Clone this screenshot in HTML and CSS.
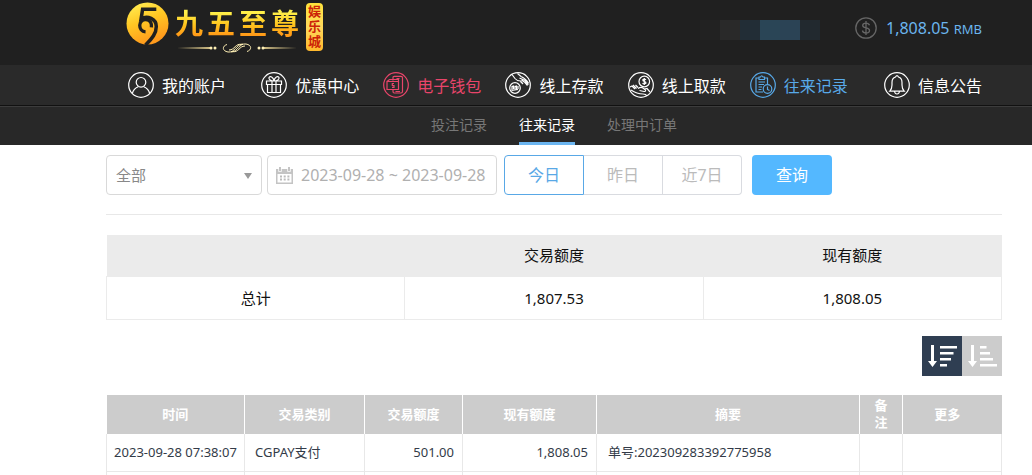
FILE: index.html
```html
<!DOCTYPE html>
<html lang="zh-CN">
<head>
<meta charset="utf-8">
<meta name="viewport" content="width=device-width, initial-scale=1">
<title>往来记录</title>
<link rel="stylesheet" href="styles.css">
</head>
<body>
<header class="site-header">
  <div class="topbar">
    <a class="logo" href="#">
      <svg class="logo-mark" viewBox="0 0 44 44" aria-hidden="true">
        <defs>
          <linearGradient id="gold" x1="0" y1="0" x2="0.4" y2="1">
            <stop offset="0" stop-color="#fff35a"/>
            <stop offset="0.5" stop-color="#ffc824"/>
            <stop offset="1" stop-color="#ff9a1c"/>
          </linearGradient>
        </defs>
        <circle cx="22" cy="22" r="21.500" fill="url(#gold)"/>
        <path d="M31 7.500H17L15.500 17C22 13.500 31 17 31 25C31 32 27 37 20 44" fill="none" stroke="#202020" stroke-width="3.600"/>
        <path d="M20 30.500C12 30 12 17.500 20.500 18C25 18.500 26.500 22 26 26" fill="none" stroke="#202020" stroke-width="3.400"/>
      </svg>
      <span class="logo-body">
        <span class="logo-name"><span>九</span><span>五</span><span>至</span><span>尊</span></span>
        <svg class="logo-rule" viewBox="0 0 124 12" aria-hidden="true">
          <path d="M2 6L36 5V7ZM122 6L88 5V7Z" fill="#d9c58a"/>
          <g fill="#fff0b5"><circle cx="36" cy="6" r="1.500"/><circle cx="40" cy="6" r="1.500"/><circle cx="84" cy="6" r="1.500"/><circle cx="88" cy="6" r="1.500"/></g>
          <path d="M52 2.500C47 4 47 9 53 10C60 11 61 2 68 2M57 9.500C64 11 64 4 70 4M72 9.500C77 8 77 3 71 2C64 1 63 10 56 10M67 2.500C60 1 60 8 54 8" fill="none" stroke="#fff0b5" stroke-width="1"/>
        </svg>
      </span>
      <span class="logo-tag">娱乐城</span>
    </a>
    <div class="user-mask" aria-hidden="true"><i class="tone-1"></i><i class="tone-2"></i><i class="tone-3"></i><i class="tone-4"></i><i class="tone-5"></i><i class="tone-6"></i></div>
    <div class="balance">
      <svg class="coin" viewBox="0 0 22 22" aria-hidden="true">
        <circle cx="11" cy="11" r="10.200"/>
        <path d="M14.500 8.300C14 6.800 12.700 6.200 11 6.200C9 6.200 7.700 7.100 7.700 8.500C7.700 12 14.500 9.900 14.500 13.400C14.500 15 13 15.900 11 15.900C9 15.900 7.700 15 7.400 13.500M11 4V18"/>
      </svg>
      <span class="amount">1,808.05 <small>RMB</small></span>
    </div>
  </div>
  <nav class="mainnav" aria-label="主导航">
    <a href="#">
      <svg viewBox="0 0 26 26" aria-hidden="true"><circle cx="13" cy="13" r="12.300"/><circle cx="13" cy="10.300" r="4.800"/><path d="M4.300 21.500C5.300 17.500 8 15.600 10.200 14.700M15.800 14.700C18 15.600 20.700 17.500 21.700 21.500"/></svg>
      <span>我的账户</span></a>
    <a href="#">
      <svg viewBox="0 0 26 26" aria-hidden="true"><circle cx="13" cy="13" r="12.300"/><path d="M5.500 9H20.500V12.500H5.500ZM6.500 12.500V20.500H19.500V12.500M11 9V20.500M15 9V20.500M13 9C10 9 7.500 7.500 8 5.500C9 3.500 12.500 5 13 9C13.500 5 17 3.500 18 5.500C18.500 7.500 16 9 13 9"/></svg>
      <span>优惠中心</span></a>
    <a class="hot" href="#">
      <svg viewBox="0 0 26 26" aria-hidden="true"><circle cx="13" cy="13" r="12.300"/><path d="M10 8.500V5.500Q10 4.300 11.200 4.300H18Q19.500 4.300 19.500 5.800V19.500Q19.500 21 18 21H11.200Q10 21 10 19.500V18M13.500 6.500H16.500M12.500 19.500H17M4 9.500H15.500V17.500H4ZM4 9.500L6.500 7.500H15.500V9.500M11 11.500H9.300V13.500H11V15.300H9"/></svg>
      <span>电子钱包</span></a>
    <a href="#">
      <svg viewBox="0 0 26 26" aria-hidden="true"><circle cx="13" cy="13" r="12.300"/><circle cx="10" cy="16" r="5.300"/><path d="M7 2.500L10 6.500Q12 9 15.500 9L18 12M12.500 1.500L16 4.500Q20 6 23.500 11M15.500 9L16.500 11M14.500 6L20 8.500L23.500 12.500M16.500 8L20 10.500L22.500 13.500M7 18V14.500L8.500 14V17.500M10 18V14.500L11.500 14V17.500M13 17V14M6.500 18.500L13 17.500"/></svg>
      <span>线上存款</span></a>
    <a href="#">
      <svg viewBox="0 0 26 26" aria-hidden="true"><circle cx="13" cy="13" r="12.300"/><circle cx="16.300" cy="9.500" r="5.300"/><path d="M18 7.800Q16.300 6.500 14.800 7.800C14.500 10 18 9 18 11Q16.300 12.600 14.500 11.200M16.300 6V13M2 15L4 14L7 17M5 13L8.500 16.500M7.500 13L10 15.500M10 16.500Q13 14.500 15 16L17.500 18Q18 19.500 16 19.500L11.500 18.500M3 18C7.500 21 10 22 15 22Q18 22 19 24M16.500 17L19 16.500L22 20"/></svg>
      <span>线上取款</span></a>
    <a class="current" href="#" aria-current="page">
      <svg viewBox="0 0 26 26" aria-hidden="true"><circle cx="13" cy="13" r="12.300"/><path d="M9 6H6V20H13M14.500 6H17.500V12M9 7.500V5H10.500Q11.700 2.500 13 5H14.500V7.500ZM8.500 10H15M8.500 12.500H14M8.500 15H12M8.500 17.500H11.500M17.500 14.500V17.500L19.500 18.500"/><circle cx="17.500" cy="17" r="4.300"/></svg>
      <span>往来记录</span></a>
    <a href="#">
      <svg viewBox="0 0 26 26" aria-hidden="true"><circle cx="13" cy="13" r="12.300"/><path d="M5.800 19.200Q8 17 8 13V10.500Q8 6 11.500 5Q13 2.300 14.500 5Q18 6 18 10.500V13Q18 17 20.200 19.200ZM10.500 19.500Q11 22 13 22Q15 22 15.500 19.500"/></svg>
      <span>信息公告</span></a>
  </nav>
  <nav class="subnav" aria-label="记录">
    <a href="#">投注记录</a>
    <a class="current" href="#" aria-current="page">往来记录</a>
    <a href="#">处理中订单</a>
  </nav>
</header>

<main class="content">
  <form class="filters">
    <div class="select-box">
      <select aria-label="交易类别"><option>全部</option></select>
    </div>
    <label class="date-box">
      <svg viewBox="0 0 17 17" aria-hidden="true"><path fill="#c4c4c4" fill-rule="evenodd" d="M0 2H3V0H5V2H12V0H14V2H17V17H0ZM1.500 7V15.500H15.500V7Z"/><path d="M2.500 2V4.500H5.500V2M11.500 2V4.500H14.500V2" fill="none" stroke="#eee"/><path d="M4 9.500H13.500M4 12.500H13.500" stroke="#bbb" stroke-width="2" stroke-dasharray="2 1.700"/></svg>
      <input type="text" aria-label="日期范围" value="2023-09-28 ~ 2023-09-28">
    </label>
    <div class="range">
      <button type="button" class="active" aria-pressed="true">今日</button>
      <button type="button">昨日</button>
      <button type="button">近7日</button>
    </div>
    <button type="button" class="query">查询</button>
  </form>

  <table class="summary">
    <thead><tr><td></td><th scope="col">交易额度</th><th scope="col">现有额度</th></tr></thead>
    <tbody><tr><th scope="row">总计</th><td>1,807.53</td><td>1,808.05</td></tr></tbody>
  </table>

  <div class="sorting">
    <button type="button" class="active" aria-label="降序">
      <svg viewBox="0 0 40 40" aria-hidden="true"><path d="M9 9H12V25H15L10.500 31L6 25H9Z"/><path d="M18 10H35V12.500H18ZM18 16H31.500V18.500H18ZM18 22H29V24.500H18ZM18 28H25V30.500H18Z"/></svg>
    </button>
    <button type="button" aria-label="升序">
      <svg viewBox="0 0 40 40" aria-hidden="true"><path d="M9 9H12V25H15L10.500 31L6 25H9Z"/><path d="M18 10H24.500V12.500H18ZM18 16H28V18.500H18ZM18 22H31V24.500H18ZM18 28H35V30.500H18Z"/></svg>
    </button>
  </div>

  <table class="records">
    <colgroup><col class="c-time"><col class="c-type"><col class="c-sum"><col class="c-left"><col><col class="c-note"><col class="c-more"></colgroup>
    <thead><tr><th>时间</th><th>交易类别</th><th>交易额度</th><th>现有额度</th><th>摘要</th><th>备注</th><th>更多</th></tr></thead>
    <tbody>
      <tr><td class="time">2023-09-28 07:38:07</td><td>CGPAY支付</td><td class="num">501.00</td><td class="num">1,808.05</td><td class="memo">单号:202309283392775958</td><td></td><td></td></tr>
      <tr><td></td><td></td><td></td><td></td><td></td><td></td><td></td></tr>
    </tbody>
  </table>
</main>
</body>
</html>
```
FILE: styles.css
```css
* { box-sizing: border-box; }
body {
  margin: 0;
  height: 100vh;
  overflow: hidden;
  background: #fff;
  color: #333;
  font: 14px/20px "Noto Sans", "Noto Sans CJK SC", sans-serif;
}
a { color: inherit; text-decoration: none; }
button, input, select { margin: 0; padding: 0; font: inherit; }

.site-header { background: #282828; color: #fff; }
.topbar {
  display: flex;
  height: 65px;
  padding: 0 50px 0 126px;
  background: #202020;
}
.logo { display: flex; align-items: flex-start; padding-top: 2px; }
.logo-mark { width: 43px; height: 43px; }
.logo-body { display: flex; flex-direction: column; padding: 6px 0 0 6px; }
.logo-name {
  display: flex;
  gap: 4px;
  font-size: 28px;
  line-height: 30px;
  font-weight: 700;
}
.logo-name span {
  background: linear-gradient(#fff04a 15%, #ffc51e 55%, #ff9a18 90%);
  -webkit-background-clip: text;
  background-clip: text;
  color: transparent;
}
.logo-rule { width: 124px; height: 12px; margin-top: 4px; }
.logo-tag {
  width: 17px;
  margin: 1px 0 0 7px;
  padding: 1px 2px 2px;
  border-radius: 4px;
  background: linear-gradient(#ffe23c, #ffd95c 50%, #ffb82c);
  color: #cc2408;
  font-size: 13px;
  line-height: 15px;
  font-weight: 700;
  overflow-wrap: anywhere;
}
.user-mask { display: flex; margin: 20px 35px 0 auto; height: 20px; }
.user-mask i { width: 20px; }
.tone-1 { background: #222; }
.tone-2 { background: #292929; }
.tone-3 { background: #222d36; }
.tone-4 { background: #2a4556; }
.tone-5 { background: #2b4355; }
.tone-6 { background: #22292f; }
.balance { display: flex; align-items: center; gap: 9px; height: 56px; color: #6bb5ee; }
.coin { width: 22px; height: 22px; fill: none; stroke: #666; stroke-width: 1.3px; }
.amount { font-size: 16px; white-space: nowrap; }
.amount small { font-size: 13px; }

.mainnav {
  display: flex;
  justify-content: space-between;
  height: 41px;
  padding: 0 50px 0 128px;
  border-bottom: 1px solid #111;
  background: #2a2a2a;
  font-size: 16px;
}
.mainnav a { display: flex; align-items: center; gap: 8px; white-space: nowrap; }
.mainnav a:first-child { padding-right: 11px; }
.mainnav a:last-child { padding-left: 12px; }
.mainnav svg { width: 26px; height: 26px; fill: none; stroke: currentColor; stroke-width: 1.2px; }
.mainnav span { padding-top: 2px; }
.mainnav .hot { color: #e8456a; }
.mainnav .current { color: #58a9e8; }

.subnav {
  display: flex;
  justify-content: center;
  gap: 32px;
  height: 39px;
  padding: 0 30px 0 106px;
  border-top: 1px solid #3c3c3c;
  color: #777;
}
.subnav a { height: 38px; line-height: 36px; }
.subnav .current { border-bottom: 3px solid #6bb5f0; color: #fff; }

.content { padding: 10px 30px 0 106px; }
.filters {
  display: flex;
  align-items: center;
  padding-bottom: 19px;
  border-bottom: 1px solid #e8e8e8;
}
.select-box { position: relative; width: 156px; margin-right: 5px; }
.select-box::after {
  content: "";
  position: absolute;
  right: 10px;
  top: 18px;
  border: 4px solid transparent;
  border-top: 6px solid #999;
  border-bottom: 0;
  pointer-events: none;
}
.select-box select {
  appearance: none;
  width: 100%;
  height: 40px;
  padding: 0 24px 0 9px;
  border: 1px solid #d9d9d9;
  border-radius: 4px;
  background: #fff;
  color: #888;
  font-size: 15px;
}
.date-box {
  display: flex;
  align-items: center;
  gap: 8px;
  width: 230px;
  height: 40px;
  margin-right: 7px;
  padding: 0 4px 0 8px;
  border: 1px solid #d9d9d9;
  border-radius: 4px;
}
.date-box svg { flex: none; width: 17px; height: 17px; }
.date-box input {
  flex: 1;
  min-width: 0;
  border: 0;
  outline: 0;
  background: none;
  color: #b0b0b0;
  font-size: 16px;
}
.range { display: flex; margin-right: 10px; }
.range button {
  width: 79px;
  height: 40px;
  border: 1px solid #d9dbe0;
  border-left: 0;
  background: #fff;
  color: #bbb;
  font-size: 16px;
}
.range button:first-child { width: 80px; border-radius: 4px 0 0 4px; }
.range button:last-child { border-radius: 0 4px 4px 0; }
.range .active { border: 1px solid #59a8e6; color: #59a8e6; }
.query {
  width: 80px;
  height: 40px;
  border: 0;
  border-radius: 4px;
  background: #54b8ff;
  color: #fff;
  font-size: 16px;
}

table { width: 100%; border-collapse: collapse; table-layout: fixed; }
.summary { margin-top: 20px; color: #111; font-size: 15px; text-align: center; }
.summary th { font-weight: 400; }
.summary thead { background: #ebebeb; }
.summary tr > * { height: 41px; padding: 0; }
.summary tbody tr > * { height: 43px; border: 1px solid #ebebeb; }

.sorting { display: flex; justify-content: flex-end; margin: 16px 0 19px; }
.sorting button { width: 40px; height: 40px; border: 0; background: #ccc; }
.sorting .active { background: #2f3e52; }
.sorting svg { display: block; width: 40px; height: 40px; fill: #fff; }

.records { font-size: 13px; color: #333b48; }
.c-time { width: 138px; }
.c-type { width: 120px; }
.c-sum { width: 98px; }
.c-left { width: 134px; }
.c-note { width: 43px; }
.c-more { width: 99px; }
.records th {
  height: 39px;
  padding: 0 12px;
  border-right: 1px solid #fff;
  background: #ccc;
  color: #fff;
  line-height: 17px;
}
.records th:last-child { border-right: 0; padding-right: 22px; }
.records td { height: 38px; padding: 0 8px 0 10px; border: 1px solid #e8e8e8; border-top: 0; }
.records .time { padding: 0; text-align: center; white-space: nowrap; }
.records .num { text-align: right; }
.records .memo { padding-left: 11px; }
```
